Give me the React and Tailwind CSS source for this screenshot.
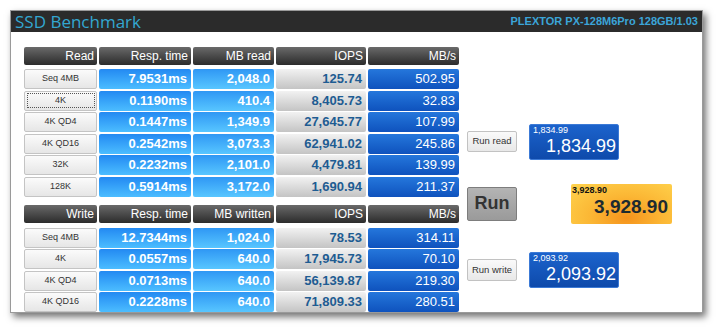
import React from "react";

const readRows = [
  ["Seq 4MB", "7.9531ms", "2,048.0", "125.74", "502.95"],
  ["4K", "0.1190ms", "410.4", "8,405.73", "32.83"],
  ["4K QD4", "0.1447ms", "1,349.9", "27,645.77", "107.99"],
  ["4K QD16", "0.2542ms", "3,073.3", "62,941.02", "245.86"],
  ["32K", "0.2232ms", "2,101.0", "4,479.81", "139.99"],
  ["128K", "0.5914ms", "3,172.0", "1,690.94", "211.37"],
];

const writeRows = [
  ["Seq 4MB", "12.7344ms", "1,024.0", "78.53", "314.11"],
  ["4K", "0.0557ms", "640.0", "17,945.73", "70.10"],
  ["4K QD4", "0.0713ms", "640.0", "56,139.87", "219.30"],
  ["4K QD16", "0.2228ms", "640.0", "71,809.33", "280.51"],
];

const headCell =
  "h-[18px] rounded-[2px] bg-linear-to-b from-[#6a6a6a] to-[#2c2c2c] text-white text-[12px] text-right pr-[3px] leading-[18px]";
const labelCell =
  "h-[20px] rounded-[2px] border border-[#c4c4c4] bg-linear-to-b from-[#fbfbfb] to-[#e6e6e6] text-[9px] text-[#333] flex items-center justify-center";
const valueBase =
  "h-[20px] rounded-[2px] text-[13px] font-bold text-right pr-[4px] leading-[20px]";

const Section = ({ title, cols, rows, focusFirst }) => (
  <div className="grid grid-cols-[73px_92px_81px_90px_91px] gap-x-[2px] gap-y-[1.5px]">
    <div className={headCell}>{title}</div>
    {cols.map((c) => (
      <div key={c} className={headCell}>
        {c}
      </div>
    ))}
    <div className="col-span-5 h-[1.5px]" />
    {rows.map((r, i) => (
      <React.Fragment key={title + i}>
        <div className={labelCell}>
          {focusFirst && i === 1 ? (
            <span className="w-[68px] h-[15px] border border-dotted border-[#555] flex items-center justify-center">
              {r[0]}
            </span>
          ) : (
            r[0]
          )}
        </div>
        <div
          className={`${valueBase} bg-linear-to-b from-[#2389f2] to-[#4cbdff] text-white`}
        >
          {r[1]}
        </div>
        <div
          className={`${valueBase} bg-linear-to-b from-[#2f97f4] to-[#58c6ff] text-white`}
        >
          {r[2]}
        </div>
        <div
          className={`${valueBase} bg-linear-to-b from-[#f2f2f2] to-[#c4c4c4] text-[#1e5c92]`}
        >
          {r[3]}
        </div>
        <div
          className={`${valueBase} bg-linear-to-b from-[#2577dc] to-[#0f52bd] text-white font-normal`}
        >
          {r[4]}
        </div>
      </React.Fragment>
    ))}
  </div>
);

const ScoreBox = ({ value }) => (
  <div className="ml-[12px] w-[90px] h-[36px] rounded-[2px] border border-[#3c7ad6] bg-linear-to-b from-[#1c63cc] to-[#0e4aab] text-white relative">
    <div className="absolute left-[3px] top-[1px] text-[9px] leading-[9px]">
      {value}
    </div>
    <div className="absolute right-[2px] top-[12px] text-[18px] leading-[18px]">
      {value}
    </div>
  </div>
);

const SmallButton = ({ children, h }) => (
  <div
    className={`w-[50px] ${h} rounded-[2px] border border-[#c2c2c2] bg-linear-to-b from-[#fafafa] to-[#e8e8e8] text-[9.5px] text-[#333] flex items-center justify-center`}
  >
    {children}
  </div>
);

export default function App() {
  return (
    <div className="w-[720px] h-[331px] bg-white pl-[10px] pt-[10px] font-['Liberation_Sans',Arial,sans-serif]">
      <div className="w-[693px] h-[303px] bg-white border border-[#9a9a9a] shadow-[3px_4px_7px_rgba(0,0,0,0.55)] flex flex-col">
        <div className="h-[26px] bg-[#2b2b2b] flex items-center justify-between px-[4px]">
          <span className="text-[17px] text-[#33a7d1] font-['Open_Sans',sans-serif] leading-none">
            SSD Benchmark
          </span>
          <span className="text-[11px] font-bold text-[#3ba5d8]">
            PLEXTOR PX-128M6Pro 128GB/1.03
          </span>
        </div>
        <div className="flex pl-[13px] pt-[15px]">
          <div className="flex flex-col gap-[8.5px]">
            <Section
              title="Read"
              cols={["Resp. time", "MB read", "IOPS", "MB/s"]}
              rows={readRows}
              focusFirst
            />
            <Section
              title="Write"
              cols={["Resp. time", "MB written", "IOPS", "MB/s"]}
              rows={writeRows}
            />
          </div>
          <div className="ml-[8px] flex flex-col">
            <div className="mt-[77px] h-[36px] flex items-center">
              <SmallButton h="h-[21px]">Run read</SmallButton>
              <ScoreBox value="1,834.99" />
            </div>
            <div className="mt-[24px] h-[40px] flex items-center">
              <div className="w-[50px] h-[34px] rounded-[2px] border border-[#7d7d7d] bg-linear-to-b from-[#b4b4b4] to-[#9a9a9a] text-[18px] font-bold text-[#333] flex items-center justify-center">
                Run
              </div>
              <div className="ml-[54px] w-[101px] h-[40px] rounded-[2px] bg-[radial-gradient(ellipse_at_55%_85%,#f5931c_0%,#fbb634_45%,#ffd44e_100%)] relative">
                <div className="absolute left-[1px] top-[1px] text-[9px] font-bold text-[#111] leading-[10px]">
                  3,928.90
                </div>
                <div className="absolute right-[4px] top-[12px] text-[19px] font-bold text-[#1d2a30] leading-[22px]">
                  3,928.90
                </div>
              </div>
            </div>
            <div className="mt-[28px] h-[37px] flex items-center">
              <SmallButton h="h-[22px]">Run write</SmallButton>
              <ScoreBox value="2,093.92" />
            </div>
          </div>
        </div>
      </div>
    </div>
  );
}
